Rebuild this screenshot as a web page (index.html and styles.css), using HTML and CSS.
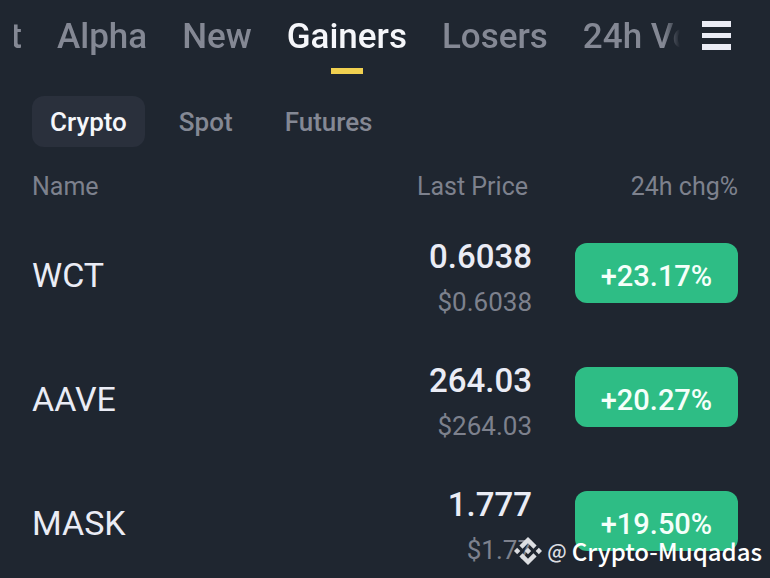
FILE: index.html
```html
<!DOCTYPE html>
<html lang="en">
<head>
    <meta charset="UTF-8">
    <meta name="viewport" content="width=device-width, initial-scale=1.0">
    <title>Markets</title>
    <link rel="stylesheet" href="styles.css">
</head>
<body>

<header class="topbar">
    <nav class="tabs">
        <button class="tab tab-cut">Hot</button>
        <button class="tab">Alpha</button>
        <button class="tab">New</button>
        <button class="tab active">Gainers</button>
        <button class="tab">Losers</button>
        <button class="tab">24h Vol</button>
    </nav>
    <button class="menu-button" aria-label="Menu">
        <svg width="29" height="29" viewBox="0 0 29 29" fill="#eaecf5">
            <rect width="29" height="6" />
            <rect y="12" width="29" height="5" />
            <rect y="23" width="29" height="6" />
        </svg>
    </button>
</header>

<div class="filters">
    <button class="filter selected">Crypto</button>
    <button class="filter">Spot</button>
    <button class="filter">Futures</button>
</div>

<main class="market">
    <table class="coins">
        <thead>
            <tr>
                <th class="name">Name</th>
                <th class="price">Last Price</th>
                <th class="change">24h chg%</th>
            </tr>
        </thead>
        <tbody>
            <tr>
                <td class="name">WCT</td>
                <td class="price">0.6038<span class="fiat">$0.6038</span></td>
                <td class="change"><button class="badge">+23.17%</button></td>
            </tr>
            <tr>
                <td class="name">AAVE</td>
                <td class="price">264.03<span class="fiat">$264.03</span></td>
                <td class="change"><button class="badge">+20.27%</button></td>
            </tr>
            <tr>
                <td class="name">MASK</td>
                <td class="price">1.777<span class="fiat">$1.77</span></td>
                <td class="change"><button class="badge">+19.50%</button></td>
            </tr>
        </tbody>
    </table>
</main>

<!-- Author tag over the list -->
<div class="watermark">
    <svg width="28" height="28" viewBox="0 0 126.6 126.6" fill="#dcdee2">
        <path d="M38.7 53.2 63.3 28.6 87.9 53.2 102.2 38.9 63.3 0 24.4 38.9z" />
        <path d="M0 63.3 14.3 49 28.6 63.3 14.3 77.6z" />
        <path d="M38.7 73.4 63.3 98 87.9 73.4 102.2 87.7 63.3 126.6 24.4 87.7z" />
        <path d="M98 63.3 112.3 49 126.6 63.3 112.3 77.6z" />
        <path d="M77.8 63.3 63.3 48.8 48.8 63.3 63.3 77.8z" />
    </svg>
    <span class="at">@</span>
    <span>Crypto-Muqadas</span>
</div>

</body>
</html>
```
FILE: styles.css
```css
* {
    box-sizing: border-box;
}

body {
    margin: 0;
    height: 100vh;
    overflow: hidden;
    position: relative;
    background-color: #1f2630;
    color: #eaecf5;
    font-family: Roboto, Arial, sans-serif;
}

button {
    padding: 0;
    border: none;
    background: none;
    color: inherit;
    font-family: inherit;
    font-weight: 500;
    cursor: pointer;
}

/* Top tabs */
.topbar {
    display: flex;
    align-items: flex-start;
    gap: 22px;
    padding: 15px 39px 0 14px;
}

.tabs {
    display: flex;
    flex: 1;
    min-width: 0;
    gap: 35px;
    overflow: hidden;
    -webkit-mask-image: linear-gradient(to left, transparent, black 16px);
    mask-image: linear-gradient(to left, transparent, black 16px);
}

.tab {
    display: flex;
    flex-direction: column;
    align-items: center;
    flex-shrink: 0;
    height: 59px;
    color: #848894;
    font-size: 35px;
    line-height: 44px;
    white-space: nowrap;
}

.tab-cut {
    width: 8px;
    align-items: flex-end;
    overflow: hidden;
}

.tab.active {
    color: #f5f6fa;
}

.tab.active::after {
    content: "";
    width: 32px;
    height: 6px;
    margin-top: 9px;
    background-color: #f0d050;
}

.menu-button {
    margin-top: 6px;
}

.menu-button svg {
    display: block;
}

/* Filters */
.filters {
    display: flex;
    gap: 16px;
    padding: 22px 32px 0;
}

.filter {
    height: 51px;
    padding: 0 18px;
    border-radius: 12px;
    color: #848894;
    font-size: 26px;
}

.filter.selected {
    background-color: #2a303c;
    color: #f5f6fa;
}

/* Coin list */
.market {
    padding: 14px 32px 0;
}

.coins {
    width: 100%;
    border-collapse: collapse;
}

.coins th {
    height: 50px;
    padding: 0;
    color: #7d818d;
    font-size: 25px;
    font-weight: 400;
    text-align: left;
}

.coins td {
    height: 124px;
    padding: 0;
}

.coins .price,
.coins .change {
    text-align: right;
}

.coins th.price {
    padding-right: 4px;
}

.coins .change {
    width: 206px;
}

.coins td.name {
    padding-top: 4px;
    font-size: 34px;
}

.coins td.price {
    padding-top: 10px;
    font-size: 33px;
    font-weight: 500;
    line-height: 48px;
}

.fiat {
    display: block;
    color: #7d818d;
    font-size: 26px;
    font-weight: 400;
    line-height: 42px;
}

.badge {
    width: 163px;
    height: 60px;
    padding-top: 6px;
    border-radius: 12px;
    background-color: #2ebd85;
    color: #f5fffa;
    font-size: 29px;
}

.watermark {
    position: absolute;
    right: 8px;
    bottom: 9px;
    display: flex;
    align-items: center;
    gap: 5px;
    color: white;
    font-family: "Noto Sans CJK SC", "Noto Sans", sans-serif;
    font-size: 24px;
    font-weight: 500;
    line-height: 36px;
}

.at {
    color: #dcdee2;
    font-size: 20px;
}
```
